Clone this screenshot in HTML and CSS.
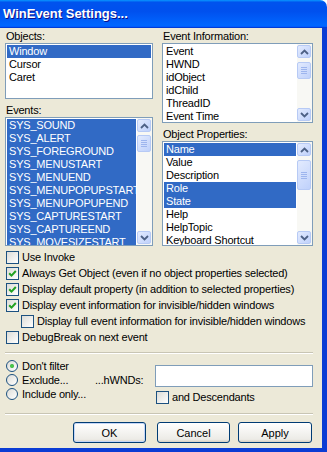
FILE: index.html
```html
<!DOCTYPE html>
<html lang="en">
<head>
    <meta charset="UTF-8">
    <title>WinEvent Settings</title>
    <link rel="stylesheet" href="styles.css">
</head>
<body>
<div class="window">
    <div class="titlebar">WinEvent Settings...</div>
    <div class="client">
        <div class="lists">
            <div class="col">
                <div class="caption">Objects:</div>
                <div class="listbox objects">
                    <div class="items">
                        <div class="item selected">Window</div>
                        <div class="item">Cursor</div>
                        <div class="item">Caret</div>
                    </div>
                </div>
                <div class="caption next">Events:</div>
                <div class="listbox events">
                    <div class="items">
                        <div class="item selected">SYS_SOUND</div>
                        <div class="item selected">SYS_ALERT</div>
                        <div class="item selected">SYS_FOREGROUND</div>
                        <div class="item selected">SYS_MENUSTART</div>
                        <div class="item selected">SYS_MENUEND</div>
                        <div class="item selected">SYS_MENUPOPUPSTART</div>
                        <div class="item selected">SYS_MENUPOPUPEND</div>
                        <div class="item selected">SYS_CAPTURESTART</div>
                        <div class="item selected">SYS_CAPTUREEND</div>
                        <div class="item selected">SYS_MOVESIZESTART</div>
                    </div>
                    <div class="scroll">
                        <div class="sb-btn"><svg width="9" height="6" viewBox="0 0 9 6"><path d="M1 5 L4.5 1.5 L8 5" fill="none" stroke="#4d6185" stroke-width="1.8"/></svg></div>
                        <div class="thumb thumb-events"><span></span><span></span><span></span><span></span></div>
                        <div class="sb-btn down"><svg width="9" height="6" viewBox="0 0 9 6"><path d="M1 1 L4.5 4.5 L8 1" fill="none" stroke="#4d6185" stroke-width="1.8"/></svg></div>
                    </div>
                </div>
            </div>
            <div class="col">
                <div class="caption">Event Information:</div>
                <div class="listbox info">
                    <div class="items">
                        <div class="item">Event</div>
                        <div class="item">HWND</div>
                        <div class="item">idObject</div>
                        <div class="item">idChild</div>
                        <div class="item">ThreadID</div>
                        <div class="item">Event Time</div>
                    </div>
                    <div class="scroll">
                        <div class="sb-btn"><svg width="9" height="6" viewBox="0 0 9 6"><path d="M1 5 L4.5 1.5 L8 5" fill="none" stroke="#4d6185" stroke-width="1.8"/></svg></div>
                        <div class="thumb thumb-info"><span></span><span></span><span></span><span></span></div>
                        <div class="sb-btn down"><svg width="9" height="6" viewBox="0 0 9 6"><path d="M1 1 L4.5 4.5 L8 1" fill="none" stroke="#4d6185" stroke-width="1.8"/></svg></div>
                    </div>
                </div>
                <div class="caption next">Object Properties:</div>
                <div class="listbox props">
                    <div class="items">
                        <div class="item selected">Name</div>
                        <div class="item">Value</div>
                        <div class="item">Description</div>
                        <div class="item selected">Role</div>
                        <div class="item selected">State</div>
                        <div class="item">Help</div>
                        <div class="item">HelpTopic</div>
                        <div class="item">Keyboard Shortcut</div>
                    </div>
                    <div class="scroll">
                        <div class="sb-btn"><svg width="9" height="6" viewBox="0 0 9 6"><path d="M1 5 L4.5 1.5 L8 5" fill="none" stroke="#4d6185" stroke-width="1.8"/></svg></div>
                        <div class="thumb thumb-props"><span></span><span></span><span></span><span></span></div>
                        <div class="sb-btn down"><svg width="9" height="6" viewBox="0 0 9 6"><path d="M1 1 L4.5 4.5 L8 1" fill="none" stroke="#4d6185" stroke-width="1.8"/></svg></div>
                    </div>
                </div>
            </div>
        </div>

        <div class="checks">
            <div class="check"><span class="box"></span>Use Invoke</div>
            <div class="check"><span class="box"><svg width="9" height="9" viewBox="0 0 9 9"><path d="M1.2 4.2 L3.5 6.6 L7.8 2" fill="none" stroke="#21a121" stroke-width="2"/></svg></span>Always Get Object (even if no object properties selected)</div>
            <div class="check"><span class="box"><svg width="9" height="9" viewBox="0 0 9 9"><path d="M1.2 4.2 L3.5 6.6 L7.8 2" fill="none" stroke="#21a121" stroke-width="2"/></svg></span>Display default property (in addition to selected properties)</div>
            <div class="check"><span class="box"><svg width="9" height="9" viewBox="0 0 9 9"><path d="M1.2 4.2 L3.5 6.6 L7.8 2" fill="none" stroke="#21a121" stroke-width="2"/></svg></span>Display event information for invisible/hidden windows</div>
            <div class="check indent"><span class="box"></span>Display full event information for invisible/hidden windows</div>
            <div class="check"><span class="box"></span>DebugBreak on next event</div>
        </div>

        <div class="sep"></div>

        <div class="filter">
            <div class="radios">
                <div class="radio"><span class="dot on"></span>Don't filter</div>
                <div class="radio"><span class="dot"></span>Exclude...</div>
                <div class="radio"><span class="dot"></span>Include only...</div>
            </div>
            <div class="hwnd-label">...hWNDs:</div>
            <div class="hwnd-col">
                <div class="hwnd-input"></div>
                <div class="check descend"><span class="box"></span>and Descendants</div>
            </div>
        </div>

        <div class="sep sep-low"></div>

        <div class="buttons">
            <button class="btn default">OK</button>
            <button class="btn">Cancel</button>
            <button class="btn wide">Apply</button>
        </div>
    </div>
</div>
</body>
</html>
```

FILE: styles.css
```css
* {
    box-sizing: border-box;
}

html, body {
    margin: 0;
    padding: 0;
}

body {
    width: 327px;
    height: 452px;
    overflow: hidden;
    background-color: #ffffff;
    font-family: Tahoma, "Liberation Sans", Arial, sans-serif;
    font-size: 11px;
    letter-spacing: -0.2px;
    color: #000000;
}

.window {
    width: 327px;
    height: 452px;
    display: flex;
    flex-direction: column;
}

.titlebar {
    height: 28px;
    flex: none;
    padding: 6px 0 0 3px;
    border-top-right-radius: 7px;
    background: linear-gradient(#0997ff 0, #0053ee 8%, #0050ee 40%, #0066ff 88%, #0066ff 93%, #005bff 95%, #003dd7 96%, #003dd7 100%);
    color: #ffffff;
    font-family: "Liberation Sans", Arial, sans-serif;
    font-size: 13px;
    font-weight: bold;
    line-height: 16px;
    letter-spacing: 0;
    text-shadow: 1px 1px #0f1089;
}

.client {
    flex: 1;
    padding: 1px 9px 0 5px;
    background-color: #ece9d8;
    border-right: 5px solid #0b3cd4;
    border-bottom: 4px solid #0b3cd4;
}

/* list boxes */

.lists {
    display: grid;
    grid-template-columns: 148px 151px;
    column-gap: 9px;
}

.col {
    display: flex;
    flex-direction: column;
}

.caption {
    height: 14px;
    line-height: 14px;
    padding-left: 1px;
}

.caption.next {
    margin-top: 4px;
}

.listbox {
    display: flex;
    overflow: hidden;
    border: 1px solid #7f9db9;
    background-color: #ffffff;
}

.objects { height: 56px; }
.events { height: 129px; }
.info { height: 80px; }
.props { height: 105px; }

.items {
    flex: 1;
    padding: 1px;
    overflow: hidden;
}

.item {
    height: 13px;
    line-height: 13px;
    padding-left: 2px;
    white-space: nowrap;
}

.item.selected {
    background-color: #316ac5;
    color: #ffffff;
}

.scroll {
    width: 15px;
    flex: none;
    display: flex;
    flex-direction: column;
    padding: 1px 1px 1px 0;
    background-color: #f8f8f4;
}

.sb-btn, .thumb {
    border: 1px solid #b7caf5;
    border-radius: 2px;
    background: linear-gradient(135deg, #e3ebfe, #bfd1fb);
}

.sb-btn {
    height: 13px;
    flex: none;
    display: flex;
    align-items: center;
    justify-content: center;
}

.sb-btn.down {
    margin-top: auto;
}

.thumb {
    flex: none;
    display: flex;
    flex-direction: column;
    align-items: center;
    justify-content: center;
    gap: 1px;
}

.thumb span {
    width: 6px;
    height: 1px;
    background-color: #9db5ee;
}

.thumb-events { margin-top: 3px; height: 17px; }
.thumb-info { margin-top: 4px; height: 17px; }
.thumb-props { margin-top: 4px; height: 30px; }

/* check boxes */

.checks {
    margin-top: 3px;
}

.check {
    height: 16px;
    display: flex;
    align-items: center;
    padding-left: 1px;
    white-space: nowrap;
}

.check.indent {
    padding-left: 16px;
}

.box {
    width: 13px;
    height: 13px;
    flex: none;
    margin-right: 3px;
    display: flex;
    align-items: center;
    justify-content: center;
    border: 1px solid #1c5180;
    background: linear-gradient(135deg, #dcdcd7, #ffffff);
}

.sep {
    margin-top: 7px;
    height: 2px;
    border-top: 1px solid #c8c5b4;
    border-bottom: 1px solid #ffffff;
}

/* filter */

.filter {
    display: flex;
    margin-top: 5px;
}

.radios {
    width: 90px;
}

.radio {
    height: 14px;
    display: flex;
    align-items: center;
    padding-left: 1px;
}

.dot {
    width: 12px;
    height: 12px;
    flex: none;
    margin-right: 4px;
    border: 1px solid #1c5180;
    border-radius: 50%;
    background: linear-gradient(135deg, #dcdcd7, #ffffff);
    display: flex;
    align-items: center;
    justify-content: center;
}

.dot.on::after {
    content: "";
    width: 4px;
    height: 4px;
    border-radius: 50%;
    background: radial-gradient(#55d455, #21a121);
}

.hwnd-label {
    width: 60px;
    padding-top: 14px;
    line-height: 14px;
}

.hwnd-col {
    width: 158px;
}

.hwnd-input {
    margin-top: 6px;
    height: 22px;
    border: 1px solid #7f9db9;
    background-color: #ffffff;
}

.check.descend {
    margin-top: 2px;
}

/* buttons */

.sep-low {
    margin-top: 8px;
}

.buttons {
    display: flex;
    justify-content: flex-end;
    gap: 8px;
    margin-top: 7px;
    padding-right: 1px;
}

.btn {
    width: 73px;
    height: 21px;
    padding: 0;
    border: 1px solid #003c74;
    border-radius: 3px;
    background: linear-gradient(#ffffff, #ecebe6 86%, #d6d0c5);
    font-family: Tahoma, "Liberation Sans", Arial, sans-serif;
    font-size: 11px;
    color: #000000;
}

.btn.default {
    margin-right: 3px;
    box-shadow: inset 0 0 0 1px #c4d6f7;
}

.btn.wide {
    width: 74px;
}
```
